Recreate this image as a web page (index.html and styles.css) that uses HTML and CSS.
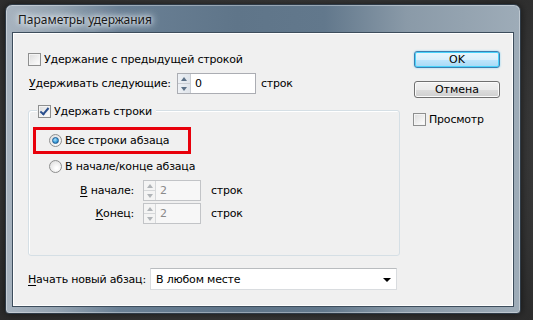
FILE: index.html
```html
<!DOCTYPE html>
<html lang="ru">
<head>
  <meta charset="UTF-8" />
  <title>Параметры удержания</title>
  <link rel="stylesheet" href="styles.css">
</head>
<body>
  <div class="window">
    <div class="titlebar"><span class="title">Параметры удержания</span></div>
    <div class="client">
      <div class="main">
        <label class="row row-first">
          <span class="check"></span>Удержание с предыдущей строкой
        </label>

        <div class="row row-spin">
          <span class="lbl-top"><u>У</u>держивать следующие:</span>
          <span class="spin spin-wide">
            <span class="arrows"><i class="up"></i><i class="down"></i></span>
            <span class="val">0</span>
          </span>
          <span class="unit">строк</span>
        </div>

        <div class="group">
          <label class="legend"><span class="check checked"></span>Удержать строки</label>

          <div class="marked">
            <label class="radio-row"><span class="radio on"></span>Все строки абзаца</label>
          </div>
          <label class="radio-row second"><span class="radio"></span>В начале/конце абзаца</label>

          <div class="sub">
            <span class="sub-lbl"><u>В</u> начале:</span>
            <span class="spin spin-off">
              <span class="arrows"><i class="up"></i><i class="down"></i></span>
              <span class="val">2</span>
            </span>
            <span class="unit">строк</span>

            <span class="sub-lbl"><u>К</u>онец:</span>
            <span class="spin spin-off">
              <span class="arrows"><i class="up"></i><i class="down"></i></span>
              <span class="val">2</span>
            </span>
            <span class="unit">строк</span>
          </div>
        </div>

        <div class="row row-bottom">
          <span class="lbl-bottom"><u>Н</u>ачать новый абзац:</span>
          <span class="select">В любом месте<i class="caret"></i></span>
        </div>
      </div>

      <div class="side">
        <button class="btn btn-ok">OK</button>
        <button class="btn">Отмена</button>
        <label class="preview"><span class="check"></span>Просмотр</label>
      </div>
    </div>
  </div>
</body>
</html>
```

FILE: styles.css
```css
html, body {
  margin: 0;
  width: 533px;
  height: 320px;
  overflow: hidden;
}

body {
  background: radial-gradient(ellipse at 50% 45%, #4a4a4a 0%, #3a3a3a 60%, #2c2c2c 100%);
  font-family: "DejaVu Sans", Tahoma, sans-serif;
  font-size: 11px;
  letter-spacing: -0.2px;
  color: #000;
}

.window {
  margin: 4px 0 0 5px;
  width: 516px;
  height: 310px;
  box-sizing: border-box;
  padding: 0 6px 6px 6px;
  border-radius: 7px 7px 4px 4px;
  border: 1px solid #2e3a46;
  background:
    linear-gradient(to right, #a7b3bf 0%, #94a3b1 10%, #6a8095 22%, #5f7589 45%, #62788c 62%, #8a9aa8 78%, #9eacb8 100%);
  box-shadow: 0 0 8px rgba(0, 0, 0, 0.6), inset 0 0 0 1px rgba(255, 255, 255, 0.35);
  display: flex;
  flex-direction: column;
}

.titlebar {
  height: 27px;
  display: flex;
  align-items: center;
  flex-shrink: 0;
}

.title {
  font-family: "Noto Sans", "Open Sans", sans-serif;
  font-size: 12px;
  letter-spacing: 0;
  color: #1a1a1a;
  margin-left: 6px;
  margin-top: 1px;
  text-shadow: 0 0 8px #e8eef3, 0 0 8px #e8eef3, 0 0 4px #e8eef3;
}

.client {
  flex: 1;
  background: #f0f0f0;
  border: 1px solid #3d4d5c;
  box-shadow: inset 0 0 0 1px #ffffff;
  display: flex;
}

.main {
  width: 374px;
  padding: 19px 0 0 15px;
  display: flex;
  flex-direction: column;
}

.row {
  display: flex;
  align-items: center;
}

.row-first {
  height: 14px;
}

.check {
  display: inline-block;
  width: 11px;
  height: 11px;
  border: 1px solid #8e8f8f;
  background: linear-gradient(135deg, #dcdcdc, #ffffff);
  box-shadow: inset 0 0 0 1px #f4f4f4;
  margin-right: 3px;
  flex-shrink: 0;
  position: relative;
}

.checked::after {
  content: "";
  position: absolute;
  left: 3px;
  top: 0;
  width: 3px;
  height: 7px;
  border: solid #2a4f8e;
  border-width: 0 2px 2px 0;
  transform: rotate(40deg);
}

.row-spin {
  margin-top: 7px;
  height: 21px;
  margin-left: 1px;
}

.lbl-top {
  width: 148px;
}

.spin {
  display: inline-flex;
  height: 21px;
  box-sizing: border-box;
  border: 1px solid #abadb3;
  background: #fff;
}

.spin-wide .arrows {
  width: 12px;
}

.spin-wide .val {
  width: 60px;
}

.arrows {
  display: flex;
  flex-direction: column;
  border-right: 1px solid #c9cdd3;
  background: linear-gradient(to right, #eef1f5, #dfe4ea);
}

.arrows i {
  flex: 1;
  position: relative;
}

.arrows .up {
  border-bottom: 1px solid #c9cdd3;
}

.arrows i::after {
  content: "";
  position: absolute;
  left: 3px;
  top: 3px;
  border-left: 3px solid transparent;
  border-right: 3px solid transparent;
}

.arrows .up::after {
  border-bottom: 4px solid #5c7086;
}

.arrows .down::after {
  border-top: 4px solid #5c7086;
}

.val {
  padding-left: 4px;
  line-height: 19px;
}

.unit {
  margin-left: 5px;
}

.group {
  margin-top: 16px;
  height: 146px;
  width: 372px;
  box-sizing: border-box;
  border: 1px solid #d5dfe5;
  border-radius: 3px;
  box-shadow: 1px 1px 0 #ffffff inset;
  position: relative;
  padding: 16px 0 0 4px;
}

.legend {
  position: absolute;
  left: 8px;
  top: -7px;
  background: #f0f0f0;
  padding: 0 4px 0 1px;
  display: flex;
  align-items: center;
  height: 14px;
}

.marked {
  width: 158px;
  height: 27px;
  box-sizing: border-box;
  border: 3px solid #e8000b;
  padding-left: 13px;
  display: flex;
  align-items: center;
}

.radio-row {
  display: flex;
  align-items: center;
  height: 14px;
}

.radio-row.second {
  margin-top: 5px;
  margin-left: 16px;
}

.radio {
  display: inline-block;
  width: 11px;
  height: 11px;
  border-radius: 50%;
  border: 1px solid #8e8f8f;
  background: radial-gradient(circle at 60% 65%, #ffffff 10%, #dcdcdc 90%);
  margin-right: 3px;
  position: relative;
}

.radio.on::after {
  content: "";
  position: absolute;
  left: 2px;
  top: 2px;
  width: 5px;
  height: 5px;
  border-radius: 50%;
  border: 1px solid #1e5c94;
  background: radial-gradient(circle at 40% 35%, #aee0fb 0%, #3ea1db 55%, #14609c 100%);
}

.sub {
  display: grid;
  grid-template-columns: 101px auto auto;
  column-gap: 9px;
  row-gap: 2px;
  align-items: center;
  justify-content: start;
  margin-top: 7px;
}

.sub-lbl {
  text-align: right;
}

.sub .unit {
  margin-left: 1px;
}

.spin-off {
  border-color: #c2c4c7;
  height: 21px;
}

.spin-off .arrows {
  width: 11px;
  background: #f4f4f4;
  border-right-color: #d6d8da;
}

.spin-off .arrows .up {
  border-bottom-color: #d6d8da;
}

.spin-off .arrows .up::after {
  border-bottom-color: #b0b4b8;
}

.spin-off .arrows .down::after {
  border-top-color: #b0b4b8;
}

.spin-off .val {
  width: 40px;
  color: #8a8a8a;
  background: #f7f7f7;
}

.row-bottom {
  margin-top: 12px;
  height: 22px;
}

.lbl-bottom {
  width: 122px;
}

.select {
  width: 247px;
  height: 22px;
  box-sizing: border-box;
  border: 1px solid #d9dcdf;
  border-top-color: #b9bcbf;
  background: #fff;
  padding-left: 5px;
  display: flex;
  align-items: center;
  position: relative;
}

.caret {
  position: absolute;
  right: 5px;
  top: 9px;
  border-left: 4px solid transparent;
  border-right: 4px solid transparent;
  border-top: 4px solid #000;
}

.side {
  padding: 18px 0 0 12px;
  display: flex;
  flex-direction: column;
}

.btn {
  width: 86px;
  height: 17px;
  padding: 0;
  font-family: "DejaVu Sans", Tahoma, sans-serif;
  font-size: 11px;
  color: #000;
  border: 1px solid #707070;
  border-radius: 3px;
  background: linear-gradient(to bottom, #f2f2f2 0%, #ebebeb 50%, #dddddd 51%, #cfcfcf 100%);
  box-shadow: inset 0 0 0 1px #fbfbfb;
  margin-bottom: 13px;
}

.btn-ok {
  border-color: #3c7fb1;
  background: linear-gradient(to bottom, #eaf6fd 0%, #d9f0fc 50%, #bee6fd 51%, #a7d9f5 100%);
  box-shadow: inset 0 0 0 1px #48d3fb, 0 0 2px #7ad0f5;
}

.preview {
  display: flex;
  align-items: center;
  margin-top: 2px;
  margin-left: -1px;
}

u {
  text-decoration: underline;
  text-underline-offset: 2px;
}
```
